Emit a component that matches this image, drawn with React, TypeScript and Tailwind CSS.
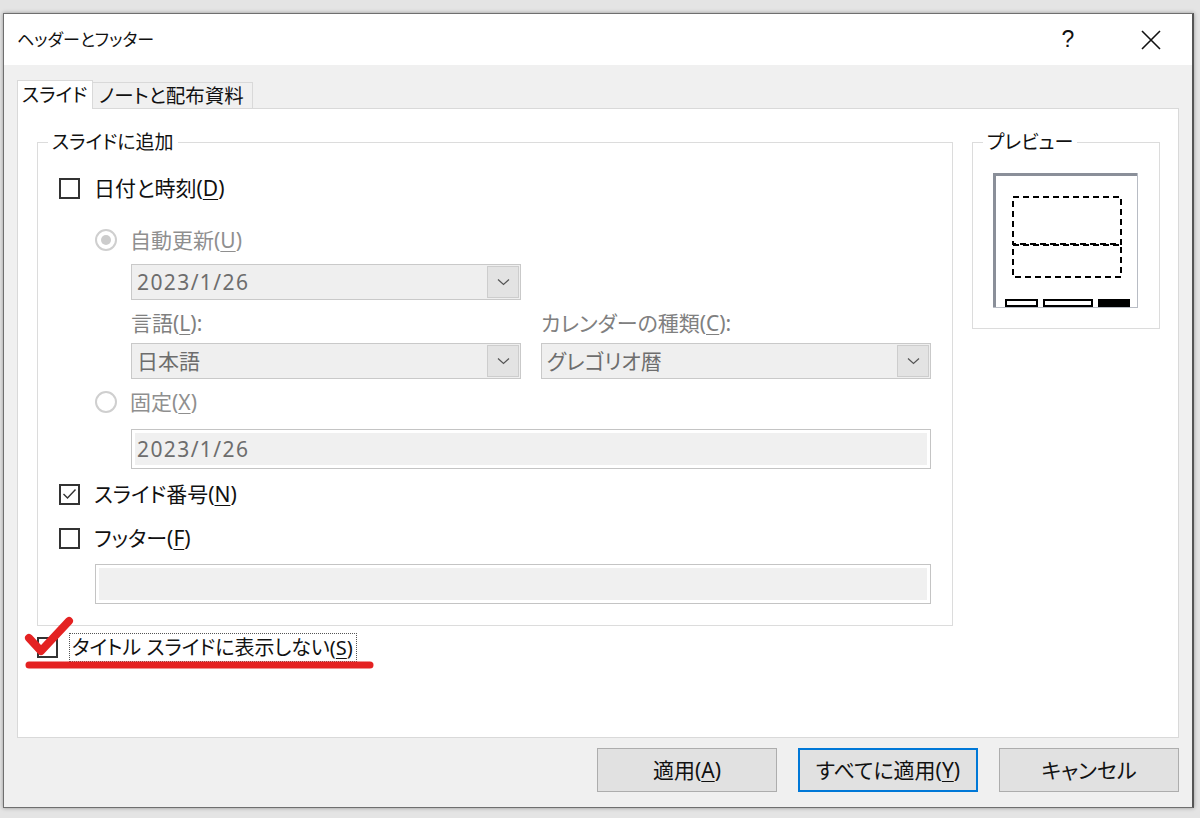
import React from "react";

const Key = ({ children }: { children: React.ReactNode }) => (
  <span className="underline underline-offset-[3px] decoration-1">{children}</span>
);

const Box = ({ checked }: { checked?: boolean }) => (
  <span className="w-[21px] h-[21px] border-2 border-[#333333] bg-white flex items-center justify-center shrink-0">
    {checked && (
      <svg width="15" height="12" viewBox="0 0 15 12">
        <path d="M1.5 6 L5.5 10 L13.5 1.5" fill="none" stroke="#333333" strokeWidth="1.4" />
      </svg>
    )}
  </span>
);

const Radio = ({ on }: { on?: boolean }) => (
  <span className="w-[22px] h-[22px] rounded-full border-2 border-[#cfcfcf] bg-white flex items-center justify-center shrink-0">
    {on && <span className="w-[10px] h-[10px] rounded-full bg-[#cccccc]" />}
  </span>
);

const Chevron = () => (
  <svg width="13" height="8" viewBox="0 0 13 8">
    <path d="M1 1.5 L6.5 6.5 L12 1.5" fill="none" stroke="#555555" strokeWidth="1.2" />
  </svg>
);

const Select = ({ value, date }: { value: string; date?: boolean }) => (
  <div className="w-[390px] h-[36px] border border-[#c9c9c9] bg-[#efefef] flex items-center justify-between pl-[5px] pr-[1px]">
    <span className={date ? "text-[21px] leading-none text-[#6d6d6d] tracking-[1.4px]" : "text-[21px] leading-none text-[#6d6d6d]"}>
      {value}
    </span>
    <span className="w-[32px] h-[32px] bg-[#e3e3e3] border border-[#cdcdcd] flex items-center justify-center">
      <Chevron />
    </span>
  </div>
);

const Preview = () => (
  <svg width="145" height="135" viewBox="0 0 145 135">
    <rect x="0" y="0" width="145" height="135" fill="#ffffff" />
    <rect x="0" y="0" width="145" height="3" fill="#8a8f99" />
    <rect x="0" y="0" width="3" height="135" fill="#8a8f99" />
    <rect x="144" y="0" width="1" height="135" fill="#b8bcc4" />
    <rect x="0" y="134" width="145" height="1" fill="#b8bcc4" />
    <rect x="20" y="24" width="108" height="47" fill="none" stroke="#000" strokeWidth="2" strokeDasharray="6 4" />
    <rect x="20" y="72" width="108" height="32" fill="none" stroke="#000" strokeWidth="2" strokeDasharray="6 4" />
    <rect x="13" y="127" width="31" height="6" fill="#fff" stroke="#000" strokeWidth="2" />
    <rect x="51" y="127" width="48" height="6" fill="#fff" stroke="#000" strokeWidth="2" />
    <rect x="105" y="126" width="32" height="8" fill="#000" />
  </svg>
);

export default function App() {
  return (
    <div className="w-[1200px] h-[818px] overflow-hidden bg-[#e4e4e4] pt-[13px] pl-[3px] font-['Noto_Sans','Noto_Sans_CJK_JP',sans-serif] [font-feature-settings:'palt'] text-[#111111]">
      <div className="w-[1191px] h-[795px] border border-[#6f6f6f] border-r-2 border-r-[#555555] shadow-[0_0_4px_rgba(0,0,0,0.35)] flex flex-col">
        {/* Title bar */}
        <div className="h-[51px] bg-white flex items-center justify-between pl-[13px] pr-[18px] shrink-0">
          <span className="text-[17px] leading-none">ヘッダーとフッター</span>
          <div className="flex items-center gap-[37px]">
            <span className="w-[46px] text-center text-[23px] leading-none font-['Liberation_Sans',sans-serif]">?</span>
            <span className="w-[46px] flex items-center justify-center">
              <svg width="20" height="20" viewBox="0 0 20 20">
                <path d="M1 1 L19 19 M19 1 L1 19" stroke="#111" strokeWidth="1.6" />
              </svg>
            </span>
          </div>
        </div>

        {/* Body */}
        <div className="flex-1 bg-[#f0f0f0] pt-[15px] pl-[13px] pr-[13px] flex flex-col">
          {/* Tabs */}
          <div className="flex items-end h-[28px]">
            <div className="relative z-10 w-[76px] h-[29px] -mb-px bg-white border border-b-0 border-[#d9d9d9] pl-[4px] flex items-center text-[19px] leading-none">
              スライド
            </div>
            <div className="w-[160px] h-[26px] bg-[#f0f0f0] border border-l-0 border-b-0 border-[#d9d9d9] pl-[6px] flex items-center text-[19.5px] leading-none">
              ノートと配布資料
            </div>
          </div>

          {/* Tab panel */}
          <div className="relative h-[630px] bg-white border border-[#d9d9d9] pl-[19px] pt-[21px]">
            <div className="flex items-start gap-[19px]">
              <fieldset className="w-[916px] border border-[#dcdcdc]">
                <legend className="ml-[10px] px-[4px] text-[19px] leading-[24px]">スライドに追加</legend>

                <div className="flex flex-col pl-[21px] pb-[21px] text-[21px]">
                  <div className="mt-[20px] h-[28px] flex items-center gap-[14px]">
                    <Box />
                    <span className="leading-none">
                      日付と時刻(<Key>D</Key>)
                    </span>
                  </div>

                  <div className="mt-[24px] ml-[36px] h-[28px] flex items-center gap-[13px] text-[#8f8f8f]">
                    <Radio on />
                    <span className="leading-none">
                      自動更新(<Key>U</Key>)
                    </span>
                  </div>

                  <div className="mt-[10px] ml-[72px]">
                    <Select value="2023/1/26" date />
                  </div>

                  <div className="mt-[11px] ml-[72px] h-[24px] flex gap-[20px] text-[#808080]">
                    <span className="w-[390px] leading-[24px]">
                      言語(<Key>L</Key>):
                    </span>
                    <span className="w-[390px] leading-[24px]">
                      カレンダーの種類(<Key>C</Key>):
                    </span>
                  </div>

                  <div className="mt-[8px] ml-[72px] flex gap-[20px]">
                    <Select value="日本語" />
                    <Select value="グレゴリオ暦" />
                  </div>

                  <div className="mt-[9px] ml-[36px] h-[28px] flex items-center gap-[13px] text-[#8f8f8f]">
                    <Radio />
                    <span className="leading-none">
                      固定(<Key>X</Key>)
                    </span>
                  </div>

                  <div className="mt-[13px] ml-[72px] w-[800px] h-[40px] border border-[#c4c4c4] bg-white p-[3px]">
                    <div className="h-full bg-[#f0f0f0] flex items-center pl-[2px] text-[#6d6d6d] leading-none tracking-[1.4px]">
                      2023/1/26
                    </div>
                  </div>

                  <div className="mt-[11px] h-[28px] flex items-center gap-[14px]">
                    <Box checked />
                    <span className="leading-none">
                      スライド番号(<Key>N</Key>)
                    </span>
                  </div>

                  <div className="mt-[16px] h-[28px] flex items-center gap-[14px]">
                    <Box />
                    <span className="leading-none">
                      フッター(<Key>F</Key>)
                    </span>
                  </div>

                  <div className="mt-[12px] ml-[36px] w-[836px] h-[40px] border border-[#c4c4c4] bg-white p-[3px]">
                    <div className="h-full bg-[#f0f0f0]" />
                  </div>
                </div>
              </fieldset>

              <fieldset className="w-[188px] border border-[#dcdcdc]">
                <legend className="ml-[10px] px-[4px] text-[19px] leading-[24px]">プレビュー</legend>
                <div className="mt-[19px] h-[135px] pl-[20px] box-content pb-[20px]">
                  <Preview />
                </div>
              </fieldset>
            </div>

            <div className="mt-[7px] h-[29px] flex items-center gap-[11px]">
              <Box />
              <span className="h-[29px] border border-dotted border-[#555555] pl-[2px] pr-[3px] flex items-center text-[20px] leading-none">
                タイトル スライドに表示しない(<Key>S</Key>)
              </span>
            </div>

            {/* red annotation */}
            <svg className="absolute left-0 top-0 pointer-events-none" width="380" height="580" viewBox="0 0 380 580">
              <path d="M11 529 L23 542 L51 512" fill="none" stroke="#e42222" strokeWidth="8" strokeLinecap="round" strokeLinejoin="round" />
              <path d="M11 556 L352 556" fill="none" stroke="#e42222" strokeWidth="7" strokeLinecap="round" />
            </svg>
          </div>

          {/* Buttons */}
          <div className="mt-[10px] flex justify-end gap-[21px] text-[21px]">
            <button className="w-[180px] h-[44px] bg-[#e1e1e1] border border-[#adadad] leading-none">
              適用(<Key>A</Key>)
            </button>
            <button className="w-[180px] h-[44px] bg-[#e1e1e1] border-2 border-[#0078d7] leading-none">
              すべてに適用(<Key>Y</Key>)
            </button>
            <button className="w-[180px] h-[44px] bg-[#e1e1e1] border border-[#adadad] leading-none">
              キャンセル
            </button>
          </div>
        </div>
      </div>
    </div>
  );
}
